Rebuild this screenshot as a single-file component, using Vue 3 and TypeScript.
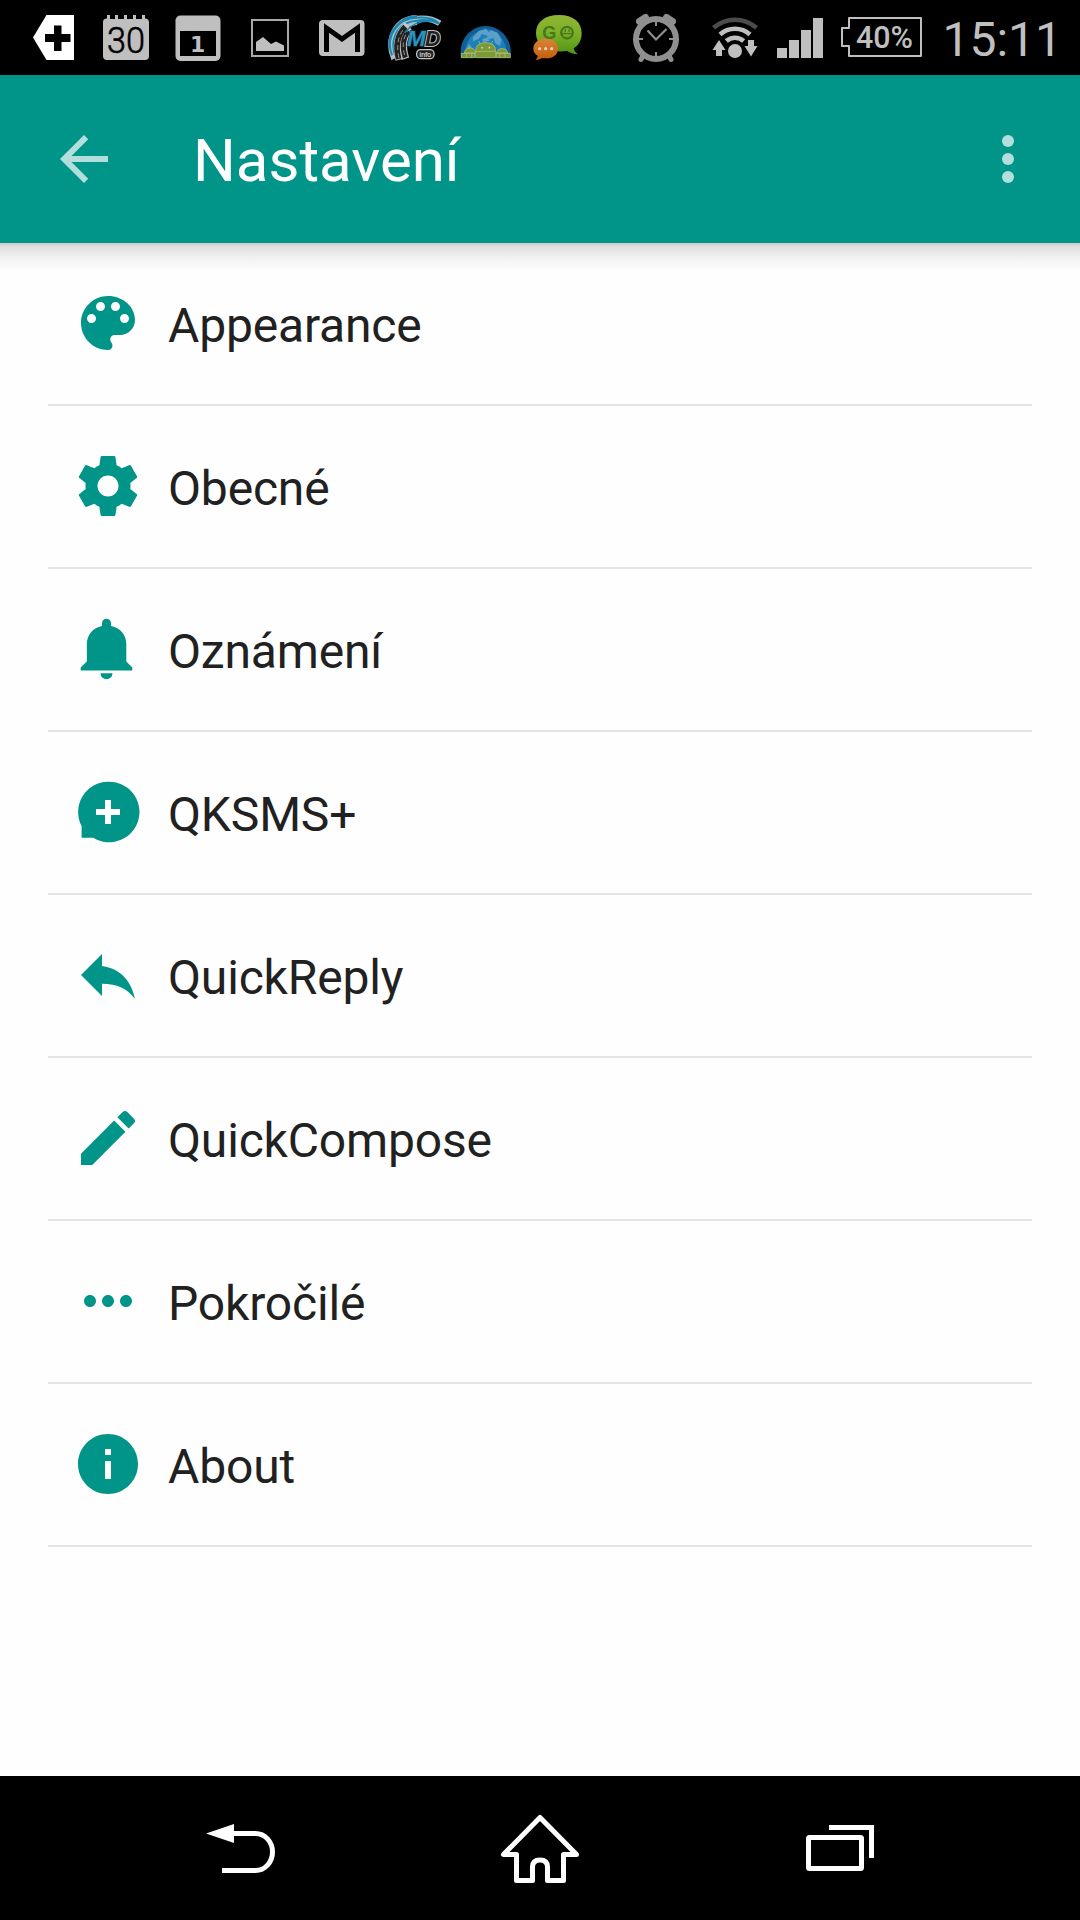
<script setup lang="ts">
interface SettingsItem {
  label: string
  path: string
}

const items: SettingsItem[] = [
  {
    label: 'Appearance',
    path: 'M12 3c-4.97 0-9 4.03-9 9s4.03 9 9 9c.83 0 1.5-.67 1.5-1.5 0-.39-.15-.74-.39-1.01-.23-.26-.38-.61-.38-.99 0-.83.67-1.5 1.5-1.5H16c2.76 0 5-2.24 5-5 0-4.42-4.03-8-9-8zm-5.5 9c-.83 0-1.5-.67-1.5-1.5S5.67 9 6.5 9 8 9.67 8 10.5 7.33 12 6.5 12zm3-4C8.67 8 8 7.33 8 6.5S8.67 5 9.5 5s1.5.67 1.5 1.5S10.33 8 9.5 8zm5 0c-.83 0-1.5-.67-1.5-1.5S13.67 5 14.5 5s1.5.67 1.5 1.5S15.33 8 14.5 8zm3 4c-.83 0-1.5-.67-1.5-1.5S16.67 9 17.5 9s1.5.67 1.5 1.5-.67 1.5-1.5 1.5z',
  },
  {
    label: 'Obecné',
    path: 'M19.43 12.98c.04-.32.07-.64.07-.98s-.03-.66-.07-.98l2.11-1.65c.19-.15.24-.42.12-.64l-2-3.46c-.12-.22-.39-.3-.61-.22l-2.49 1c-.52-.4-1.08-.73-1.69-.98l-.38-2.65C14.46 2.18 14.25 2 14 2h-4c-.25 0-.46.18-.49.42l-.38 2.65c-.61.25-1.17.59-1.69.98l-2.49-1c-.23-.09-.49 0-.61.22l-2 3.46c-.13.22-.07.49.12.64l2.11 1.65c-.04.32-.07.65-.07.98s.03.66.07.98l-2.11 1.65c-.19.15-.24.42-.12.64l2 3.46c.12.22.39.3.61.22l2.49-1c.52.4 1.08.73 1.69.98l.38 2.65c.03.24.24.42.49.42h4c.25 0 .46-.18.49-.42l.38-2.65c.61-.25 1.17-.59 1.69-.98l2.49 1c.23.09.49 0 .61-.22l2-3.46c.12-.22.07-.49-.12-.64l-2.11-1.65zM12 15.5c-1.93 0-3.5-1.57-3.5-3.5s1.57-3.5 3.5-3.5 3.5 1.57 3.5 3.5-1.57 3.5-3.5 3.5z',
  },
  {
    label: 'Oznámení',
    path: 'M9.5 20.1h4a2 2 0 0 1-4 0zM18.1 16.2V10.3c0-3-2-5.4-5.1-6V3.4a1.5 1.5 0 0 0-3 0v.9C7 4.900 4.95 7.3 4.95 10.3v5.9L2.9 18.2v.95h17.2v-.95z',
  },
  {
    label: 'QKSMS+',
    path: 'M12 1.9a10.1 10.1 0 1 1-4.9 18.7H3.2v-3.9A10.1 10.1 0 0 1 12 1.9zM11 8v3H8v2h3v3h2v-3h3v-2h-3V8z',
  },
  {
    label: 'QuickReply',
    path: 'M10 9V5l-7 7 7 7v-4.100c5 0 8.500 1.600 11 5.100-1-5-4-10-11-11z',
  },
  {
    label: 'QuickCompose',
    path: 'M3 17.25V21h3.75L17.81 9.94l-3.75-3.75L3 17.25zM20.71 7.04c.39-.39.39-1.02 0-1.41l-2.34-2.34c-.39-.39-1.02-.39-1.41 0l-1.83 1.83 3.75 3.75 1.83-1.83z',
  },
  {
    label: 'Pokročilé',
    path: 'M6 10c-1.1 0-2 .9-2 2s.9 2 2 2 2-.9 2-2-.9-2-2-2zm12 0c-1.1 0-2 .9-2 2s.9 2 2 2 2-.9 2-2-.9-2-2-2zm-6 0c-1.1 0-2 .9-2 2s.9 2 2 2 2-.9 2-2-.9-2-2-2z',
  },
  {
    label: 'About',
    path: 'M12 2C6.48 2 2 6.48 2 12s4.48 10 10 10 10-4.48 10-10S17.52 2 12 2zm1 15h-2v-6h2v6zm0-8h-2V7h2v2z',
  },
]
</script>

<template>
  <div class="screen">
    <div class="status">
      <div class="notifications">
        <!-- tag with plus -->
        <svg width="42" height="75" viewBox="33 0 42 75">
          <path fill="#fff" d="M33 37.500 46.500 15H74v45H46.500z" />
          <path fill="#000" d="M54 25.500h7.500v8.500h9v8h-9v9H54v-9h-9v-8h9z" />
        </svg>
        <!-- calendar 30 -->
        <svg width="47" height="75" viewBox="103 0 47 75">
          <path fill="#bfbfbf" d="M107 15h3v4h5v-4h3v4h6v-4h3v4h6v-4h3v4h6v-4h3v3.500q4 0 4 4V56q0 4-4 4H107q-4 0-4-4V22q0-3.500 4-3.500z" />
          <text x="107" y="53" class="thin-digits" textLength="38" lengthAdjust="spacingAndGlyphs">30</text>
        </svg>
        <!-- calendar 1 -->
        <svg width="46" height="75" viewBox="175 0 46 75">
          <rect x="175.500" y="15.500" width="45" height="45.500" rx="5" fill="#bfbfbf" />
          <rect x="180" y="31" width="36" height="25" fill="#000" />
          <text x="190" y="52" class="bold-digit">1</text>
        </svg>
        <!-- picture -->
        <svg width="38" height="75" viewBox="251 0 38 75">
          <rect x="252" y="20" width="36" height="36" fill="none" stroke="#a9a9a9" stroke-width="2" />
          <path fill="#bfbfbf" d="M256 51v-9l7-5 8 7 5-2.500 8 4V51z" />
        </svg>
        <!-- mail -->
        <svg width="46" height="75" viewBox="319 0 46 75">
          <rect x="319" y="20" width="45.500" height="36" rx="4" fill="#bfbfbf" />
          <path fill="none" stroke="#000" stroke-width="5" d="M326.500 52V28l15.500 11 15.500-11v24" />
        </svg>
        <!-- MD info -->
        <svg width="54" height="75" viewBox="260 0 162 225">
          <g fill="none">
            <path stroke="#b4bcc0" stroke-width="30" d="M287 174C264 120 290 62 350 60" />
            <path stroke="#b4bcc0" stroke-width="18" d="M340 57Q390 50 418 70" />
            <path stroke="#1787b4" stroke-width="6" d="M275 166C254 110 290 54 350 53Q395 49 417 71M283 163C268 110 298 64 350 62Q385 56 414 70M268 145C260 95 300 50 350 48" />
            <path stroke="#c4c4c4" stroke-width="24" d="M297 179Q280 115 322 75M315 176Q296 120 330 84" />
            <path stroke="#222" stroke-width="17" d="M295 177Q279 117 315 80" />
            <path stroke="#222" stroke-width="15" d="M315 173Q299 126 324 92" />
            <path stroke="#ccc" stroke-width="2" stroke-dasharray="14 10" d="M296 174Q283 120 312 84M313 165Q301 125 322 94" />
            <path stroke="#1787b4" stroke-width="4" d="M314 98Q340 62 388 63" />
          </g>
          <path fill="#000" d="M332 90Q355 68 390 72l35 14v60H325z" />
          <text x="320" y="138" class="md md-blue" textLength="56" lengthAdjust="spacingAndGlyphs">M</text>
          <text x="374" y="138" class="md md-dark">D</text>
          <rect x="349" y="149" width="52" height="27" rx="12" fill="#222" stroke="#c4c4c4" stroke-width="4" />
          <text x="357" y="170" class="md-info" textLength="36">info</text>
        </svg>
        <!-- moon with robots -->
        <svg width="52" height="75" viewBox="481 0 156 225">
          <path fill="#125f98" d="M483 173v-18a75 77 0 0 1 150 0v18z" />
          <path fill="#1f7fb8" d="M497 150q6-50 60-62 50 4 64 62z" />
          <path fill="#6aa9cc" opacity=".8" d="M520 112l18-20 22-6 8 12-10 8-12-4-8 14-18 8zM560 104l14-14 20 8 12 22-6 18-14-10-4-14-14 4zM548 118l16-6 6 10-20 6zM500 146l8-14 8 10-6 10z" />
          <g fill="#7d9a32" stroke="#b8c78b" stroke-width="2">
            <path d="M485 173v-13h40v13zM494 159q2-15 17-15t17 15zM590 173v-13h42v13zM590 159q2-13 17-13t17 13z" />
            <path d="M528 173v-20q0-25 30-25t30 25v20z" />
            <path d="M528 154h60M541 131l-4-8M575 131l4-8M500 160v13M516 160v13M600 160v13M616 160v13" />
          </g>
          <circle cx="547" cy="143" r="2.500" fill="#ddd" />
          <circle cx="569" cy="143" r="2.500" fill="#ddd" />
        </svg>
        <!-- GO chat bubbles -->
        <svg width="50" height="75" viewBox="700 0 150 225">
          <defs>
            <linearGradient id="bubble-green" x1="0" y1="0" x2="0" y2="1">
              <stop offset="0" stop-color="#91b535" />
              <stop offset=".5" stop-color="#7cae25" />
              <stop offset="1" stop-color="#4e9418" />
            </linearGradient>
            <linearGradient id="bubble-orange" x1="0" y1="0" x2="0" y2="1">
              <stop offset="0" stop-color="#d98436" />
              <stop offset="1" stop-color="#c45d09" />
            </linearGradient>
          </defs>
          <path fill="url(#bubble-green)" d="M778 45c44 0 68 22 68 54 0 22-9 37-24 46 2 8 6 13 13 18-14 0-25-5-32-10-54 7-94-14-94-54 0-33 26-54 69-54z" />
          <text x="728" y="118" class="go">G</text>
          <circle cx="802" cy="98" r="17.500" fill="none" stroke="#477a1d" stroke-width="7" />
          <path fill="none" stroke="#477a1d" stroke-width="4" d="M785 101h34M797 88v9M808 88v9" />
          <path fill="url(#bubble-orange)" d="M738 116c23 0 37 12 37 30s-15 29-36 29c-6 0-10 0-13-1-5 4-11 6-19 5 5-4 7-8 7-12-8-5-13-12-13-21 0-18 15-30 37-30z" />
          <g fill="#e4ccba">
            <circle cx="720" cy="146" r="5" />
            <circle cx="738" cy="146" r="5" />
            <circle cx="756" cy="146" r="5" />
          </g>
        </svg>
      </div>

      <div class="system">
        <!-- alarm -->
        <svg width="48" height="75" viewBox="632 0 48 75">
          <g stroke="#8f8f8f" fill="none">
            <circle cx="656" cy="39" r="20" stroke-width="6" />
            <path stroke-width="7" stroke-linecap="round" d="M639.500 21.500l6-4M672.500 21.500l-6-4" />
            <path stroke-width="5" stroke-linecap="round" d="M643 56l-2 3.500M669 56l2 3.500" />
            <path stroke-width="2" d="M656 21v5M656 52v5M638 39h5M669 39h5" />
            <path stroke-width="2.200" d="M647.500 30.500L656 39.500l10.500-10.500" />
          </g>
        </svg>
        <!-- wifi -->
        <svg width="48" height="75" viewBox="711 0 48 75">
          <path fill="none" stroke="#4b4b4b" stroke-width="4.500" d="M713.500 27.800a32.500 32.500 0 0 1 43 0" />
          <g fill="none" stroke="#bfbfbf">
            <path stroke-width="4.500" d="M720 34.500a22.500 22.500 0 0 1 30 0" />
            <path stroke-width="4.500" d="M726.300 41a13 13 0 0 1 17.400 0" />
          </g>
          <g fill="#bfbfbf">
            <circle cx="735" cy="51" r="7" />
            <path d="M719 40l6.500 10H722v6h-6v-6h-3.500zM751 56.500l6.500-10.500H754v-6h-6v6h-3.500z" />
          </g>
        </svg>
        <!-- signal -->
        <svg width="46" height="75" viewBox="777 0 46 75">
          <path fill="#bfbfbf" d="M777 48h10v10h-10zM789 40h10v18h-10zM801 30h10v28h-10zM813 18h10v40h-10z" />
        </svg>
        <!-- battery -->
        <svg width="82" height="75" viewBox="841 0 82 75">
          <path fill="none" stroke="#bfbfbf" stroke-width="2" stroke-linejoin="round" d="M849 18h72v38h-72V46h-7V28h7z" />
          <text x="856" y="48" class="battery-level" textLength="57" lengthAdjust="spacingAndGlyphs">40%</text>
        </svg>
        <span class="clock">15:11</span>
      </div>
    </div>

    <header class="toolbar">
      <svg class="bar-icon" viewBox="0 0 24 24"><path d="M20 11H7.830l5.590-5.590L12 4l-8 8 8 8 1.410-1.410L7.830 13H20v-2z" /></svg>
      <h1 class="title">Nastavení</h1>
      <svg class="bar-icon" viewBox="0 0 24 24">
        <circle cx="12" cy="6" r="2" /><circle cx="12" cy="12" r="2" /><circle cx="12" cy="18" r="2" />
      </svg>
    </header>

    <main class="list">
      <div v-for="item in items" :key="item.label" class="row">
        <svg class="row-icon" viewBox="0 0 24 24"><path fill-rule="evenodd" :d="item.path" /></svg>
        <span class="label">{{ item.label }}</span>
      </div>
    </main>

    <nav class="navbar">
      <div class="nav-cell">
        <svg width="68" height="144" viewBox="206 1776 68 144" overflow="visible">
          <path fill="#fff" d="M206 1833.500l28-9.500v19z" />
          <path fill="none" stroke="#fff" stroke-width="5" d="M233 1833.500h22.500a17 18.500 0 0 1 0 37H222" />
        </svg>
      </div>
      <div class="nav-cell">
        <svg width="80" height="144" viewBox="500 1776 80 144">
          <path fill="none" stroke="#fff" stroke-width="5" stroke-linejoin="round" d="M540 1817.500l-36.500 37h13v26h16v-13.500q0-7 7.500-7t7.500 7v13.500h16v-26h13z" />
        </svg>
      </div>
      <div class="nav-cell">
        <svg width="70" height="144" viewBox="805 1776 70 144">
          <rect x="808.500" y="1837.500" width="53" height="31" rx="1" fill="none" stroke="#fff" stroke-width="5" />
          <path fill="none" stroke="#fff" stroke-width="5" d="M829 1827.500h42.500v30.500" />
        </svg>
      </div>
    </nav>
  </div>
</template>

<style>
body {
  margin: 0;
  background: #fff;
}
</style>

<style scoped>
.screen {
  width: 1080px;
  height: 1920px;
  display: flex;
  flex-direction: column;
  overflow: hidden;
  background: #fefefe;
  font-family: Roboto, "Liberation Sans", sans-serif;
}

svg {
  display: block;
  flex: none;
}

.status {
  height: 75px;
  flex: none;
  display: flex;
  justify-content: space-between;
  padding: 0 18px 0 33px;
  background: #000;
}

.notifications,
.system {
  display: flex;
  align-items: center;
}

.notifications {
  gap: 28px;
}

.notifications svg:nth-child(3) {
  margin-left: -3px;
}

.notifications svg:nth-child(4),
.notifications svg:nth-child(5) {
  margin-left: 2px;
}

.notifications svg:nth-child(6) {
  margin-left: -6px;
}

.notifications svg:nth-child(7) {
  margin-left: -9px;
}

.notifications svg:nth-child(8) {
  margin-left: -7px;
}

.system svg + svg {
  margin-left: 18px;
}

.system svg:first-child {
  margin-right: 13px;
}

.thin-digits {
  font: 300 36px Roboto, sans-serif;
  fill: #000;
  stroke: #000;
  stroke-width: 0.6px;
}

.bold-digit {
  font: bold 22px "DejaVu Sans", sans-serif;
  fill: #bfbfbf;
}

.md {
  font: italic bold 64px "Liberation Sans", sans-serif;
  stroke-width: 4px;
  paint-order: stroke;
}

.md-blue {
  fill: #2b93be;
  stroke: #0d3444;
}

.md-dark {
  fill: #222;
  stroke: #c4c4c4;
  stroke-width: 6px;
}

.md-info {
  font: bold 21px "Liberation Sans", sans-serif;
  fill: #c4c4c4;
}

.go {
  font: bold 54px "Liberation Sans", sans-serif;
  fill: #477a1d;
}

.battery-level {
  font: 500 31px Roboto, sans-serif;
  fill: #bfbfbf;
}

.clock {
  margin-left: 19px;
  font-size: 48px;
  line-height: 56px;
  padding-top: 5px;
  color: #bfbfbf;
}

.toolbar {
  position: relative;
  z-index: 1;
  height: 168px;
  flex: none;
  display: flex;
  align-items: center;
  padding: 0 36px 0 48px;
  box-sizing: border-box;
  background: #009588;
}

.toolbar::after {
  content: "";
  position: absolute;
  left: 0;
  right: 0;
  top: 100%;
  height: 30px;
  background: linear-gradient(#cfcfcf 0, #d3d3d3 2px, #dedede 3px, #ededed 12px, #f8f8f8 21px, #fefefe 30px);
}

.bar-icon {
  width: 72px;
  height: 72px;
  fill: #b2dfdb;
}

.title {
  flex: 1;
  margin: 0 0 0 73px;
  padding-top: 4px;
  font-size: 60px;
  line-height: 70px;
  font-weight: 400;
  color: #fff;
}

.list {
  flex: 1;
  padding: 0 48px;
}

.row {
  height: 161px;
  display: flex;
  align-items: center;
  padding-left: 24px;
  border-bottom: 2px solid #e4e4e4;
}

.row-icon {
  width: 72px;
  height: 72px;
  margin-bottom: 1px;
  fill: #009588;
}

.label {
  margin-left: 24px;
  padding-top: 4px;
  font-size: 48px;
  line-height: 56px;
  letter-spacing: -0.17px;
  color: #212121;
}

.navbar {
  height: 144px;
  flex: none;
  display: flex;
  padding: 0 90px;
  background: #000;
}

.nav-cell {
  flex: 1;
  display: flex;
  justify-content: center;
}
</style>
